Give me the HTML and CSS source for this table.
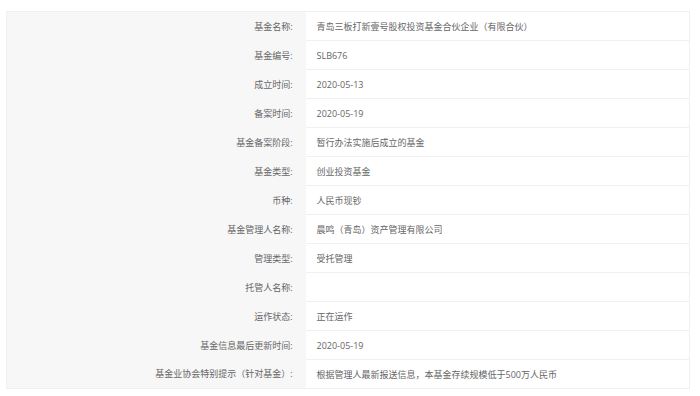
FILE: index.html
```html
<!DOCTYPE html>
<html lang="zh-CN">
<head>
  <meta charset="UTF-8" />
  <title>基金信息</title>
  <link rel="stylesheet" href="styles.css">
</head>
<body>
  <table class="fund-table">
    <tr><td class="label">基金名称:</td><td class="value">青岛三板打新壹号股权投资基金合伙企业（有限合伙）</td></tr>
    <tr><td class="label">基金编号:</td><td class="value">SLB676</td></tr>
    <tr><td class="label">成立时间:</td><td class="value">2020-05-13</td></tr>
    <tr><td class="label">备案时间:</td><td class="value">2020-05-19</td></tr>
    <tr><td class="label">基金备案阶段:</td><td class="value">暂行办法实施后成立的基金</td></tr>
    <tr><td class="label">基金类型:</td><td class="value">创业投资基金</td></tr>
    <tr><td class="label">币种:</td><td class="value">人民币现钞</td></tr>
    <tr><td class="label">基金管理人名称:</td><td class="value">晨鸣（青岛）资产管理有限公司</td></tr>
    <tr><td class="label">管理类型:</td><td class="value">受托管理</td></tr>
    <tr><td class="label">托管人名称:</td><td class="value"></td></tr>
    <tr><td class="label">运作状态:</td><td class="value">正在运作</td></tr>
    <tr><td class="label">基金信息最后更新时间:</td><td class="value">2020-05-19</td></tr>
    <tr><td class="label">基金业协会特别提示（针对基金）:</td><td class="value">根据管理人最新报送信息，本基金存续规模低于500万人民币</td></tr>
  </table>
</body>
</html>
```

FILE: styles.css
```css
* {
  box-sizing: border-box;
}

body {
  margin: 0;
  padding: 11px 10px 0 6px;
  background: #fff;
  font-family: "Open Sans", "Noto Sans CJK SC", sans-serif;
  font-size: 9px;
  color: #666;
}

.fund-table {
  width: 684px;
  border-collapse: collapse;
  border: 1px solid #f0f0f0;
}

.fund-table td {
  height: 29px;
  padding: 0;
  vertical-align: middle;
}

.label {
  width: 299px;
  background: #f7f7f7;
  text-align: right;
  padding-right: 13px !important;
}

.value {
  background: #fff;
  padding-left: 11px !important;
  border-bottom: 1px solid #f0f0f0;
}
```
